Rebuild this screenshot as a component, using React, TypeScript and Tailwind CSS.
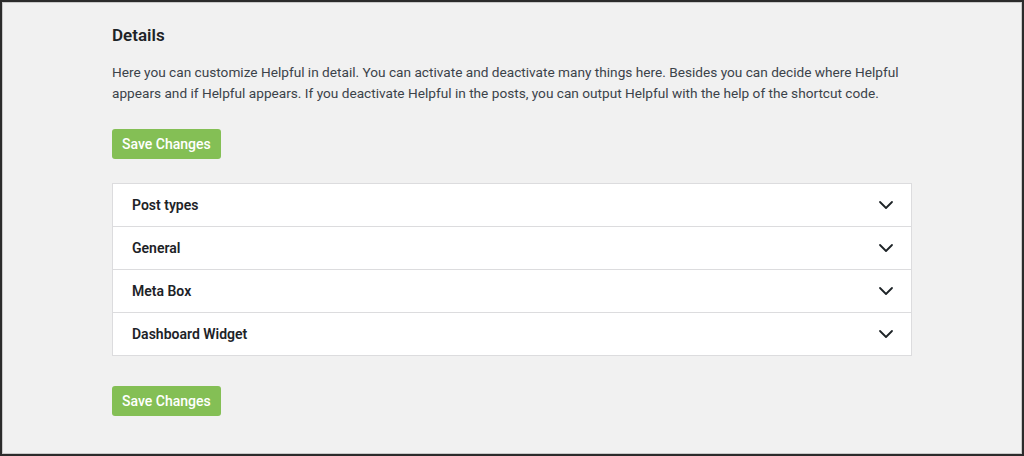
import { ChevronDown } from "lucide-react";

const sections = ["Post types", "General", "Meta Box", "Dashboard Widget"];

function SaveButton() {
  return (
    <button className="h-[30px] px-[10px] rounded-[3px] bg-[#84bf55] text-white text-[14px] font-medium leading-none">
      Save Changes
    </button>
  );
}

export default function App() {
  return (
    <div
      className="h-[456px] w-[1024px] border-2 border-[#2b2b2b] bg-[#f1f1f1] text-[#3c434a] overflow-hidden"
      style={{ fontFamily: "Roboto, 'Noto Sans', sans-serif" }}
    >
      <div className="border border-[#c9c9c9] h-full">
        <div className="pl-[109px] pr-[110px] pt-[21px]">
          <h2 className="text-[17px] font-semibold text-[#1d2327] leading-[22px]">
            Details
          </h2>
          <p className="mt-[16px] text-[13.65px] leading-[21px] whitespace-nowrap">
            Here you can customize Helpful in detail. You can activate and deactivate many things here. Besides you can decide where Helpful
            <br />
            appears and if Helpful appears. If you deactivate Helpful in the posts, you can output Helpful with the help of the shortcut code.
          </p>
          <div className="mt-[25px]">
            <SaveButton />
          </div>
          <div className="mt-[24px] w-[800px] bg-white border border-[#dcdcde]">
            {sections.map((s, i) => (
              <div
                key={s}
                className={`flex items-center justify-between pl-[19px] pr-[13px] ${
                  i > 0 ? "h-[43px] border-t border-[#dcdcde]" : "h-[42px]"
                }`}
              >
                <span className="text-[14px] font-semibold text-[#1d2327]">{s}</span>
                <ChevronDown className="w-[24px] h-[24px] text-[#1d2327]" strokeWidth={1.8} />
              </div>
            ))}
          </div>
          <div className="mt-[30px]">
            <SaveButton />
          </div>
        </div>
      </div>
    </div>
  );
}
